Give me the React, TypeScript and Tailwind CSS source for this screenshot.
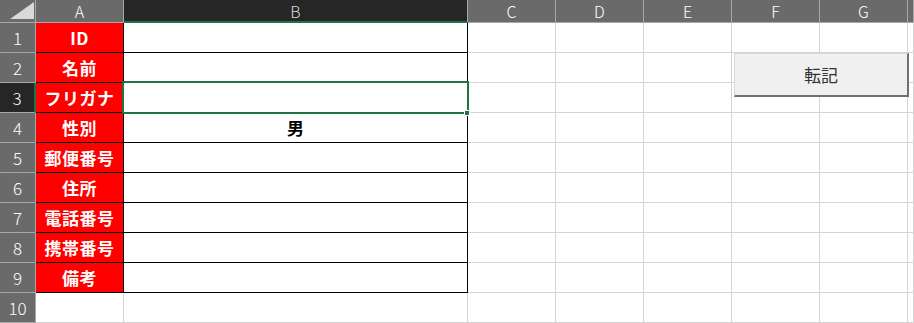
import React from 'react';

const COLS = ['A', 'B', 'C', 'D', 'E', 'F', 'G', ''];
const LABELS = ['ID', '名前', 'フリガナ', '性別', '郵便番号', '住所', '電話番号', '携帯番号', '備考'];
const VALUES: Record<number, string> = { 3: '男' };

const jp = { fontFamily: '"Noto Sans CJK JP", "Noto Sans", sans-serif' };

export default function App() {
  return (
    <div className="relative w-[914px] h-[323px] overflow-hidden bg-white" style={jp}>
      <div className="grid grid-cols-[36px_88px_344px_88px_88px_88px_88px_88px_1fr] grid-rows-[23px_repeat(10,30px)]">
        {/* corner */}
        <div className="relative bg-[#6a6a6a] border-r border-b border-[#a8a8a8]">
          <svg className="absolute left-[10px] top-[2px]" width="24" height="17" viewBox="0 0 24 17">
            <polygon points="0,17 24,17 24,0" fill="#d9d9d9" />
          </svg>
        </div>

        {/* column headers */}
        {COLS.map((c) =>
          c === 'B' ? (
            <div key={c} className="flex items-center justify-center bg-[#262626] border-r border-[#a8a8a8] border-b-2 border-b-[#217346] text-[16px] font-light text-[#d8d8d8] leading-none">
              {c}
            </div>
          ) : (
            <div key={c || 'H'} className="flex items-center justify-center bg-[#6a6a6a] border-r border-b border-[#a8a8a8] text-[16px] font-light text-white leading-none">
              {c}
            </div>
          )
        )}

        {/* rows */}
        {Array.from({ length: 10 }).map((_, r) => (
          <React.Fragment key={r}>
            <div
              className={
                r === 2
                  ? 'flex items-center justify-center bg-[#262626] border-b border-[#a8a8a8] border-r-2 border-r-[#217346] text-[17px] font-light text-white leading-none'
                  : 'flex items-center justify-center bg-[#6a6a6a] border-r border-b border-[#a8a8a8] text-[17px] font-light text-white leading-none'
              }
            >
              {r + 1}
            </div>
            {r < 9 ? (
              <>
                <div className="flex items-center justify-center bg-[#ff0000] border-r border-b border-black text-[17px] font-bold text-white leading-none tracking-[0.5px]">
                  {LABELS[r]}
                </div>
                <div className="flex items-center justify-center bg-white border-r border-b border-black text-[17px] font-bold text-black leading-none">
                  {VALUES[r] ?? ''}
                </div>
              </>
            ) : (
              <>
                <div className="border-r border-b border-[#d4d4d4]" />
                <div className="border-r border-b border-[#d4d4d4]" />
              </>
            )}
            {[0, 1, 2, 3, 4, 5].map((k) => (
              <div key={k} className="border-r border-b border-[#d4d4d4]" />
            ))}
          </React.Fragment>
        ))}
      </div>

      {/* active cell B3 */}
      <div className="absolute left-[122px] top-[81px] w-[347px] h-[33px] border-2 border-[#217346]" />
      <div className="absolute left-[464px] top-[110px] w-[6px] h-[6px] bg-[#217346] border border-white" />

      {/* form button */}
      <button className="absolute left-[734px] top-[53px] w-[175px] h-[44px] bg-[#f0f0f0] border-t border-l border-[#d8d8d8] border-r-2 border-b-2 border-r-[#707070] border-b-[#707070] text-[17px] text-[#333333] leading-none">
        転記
      </button>
    </div>
  );
}
